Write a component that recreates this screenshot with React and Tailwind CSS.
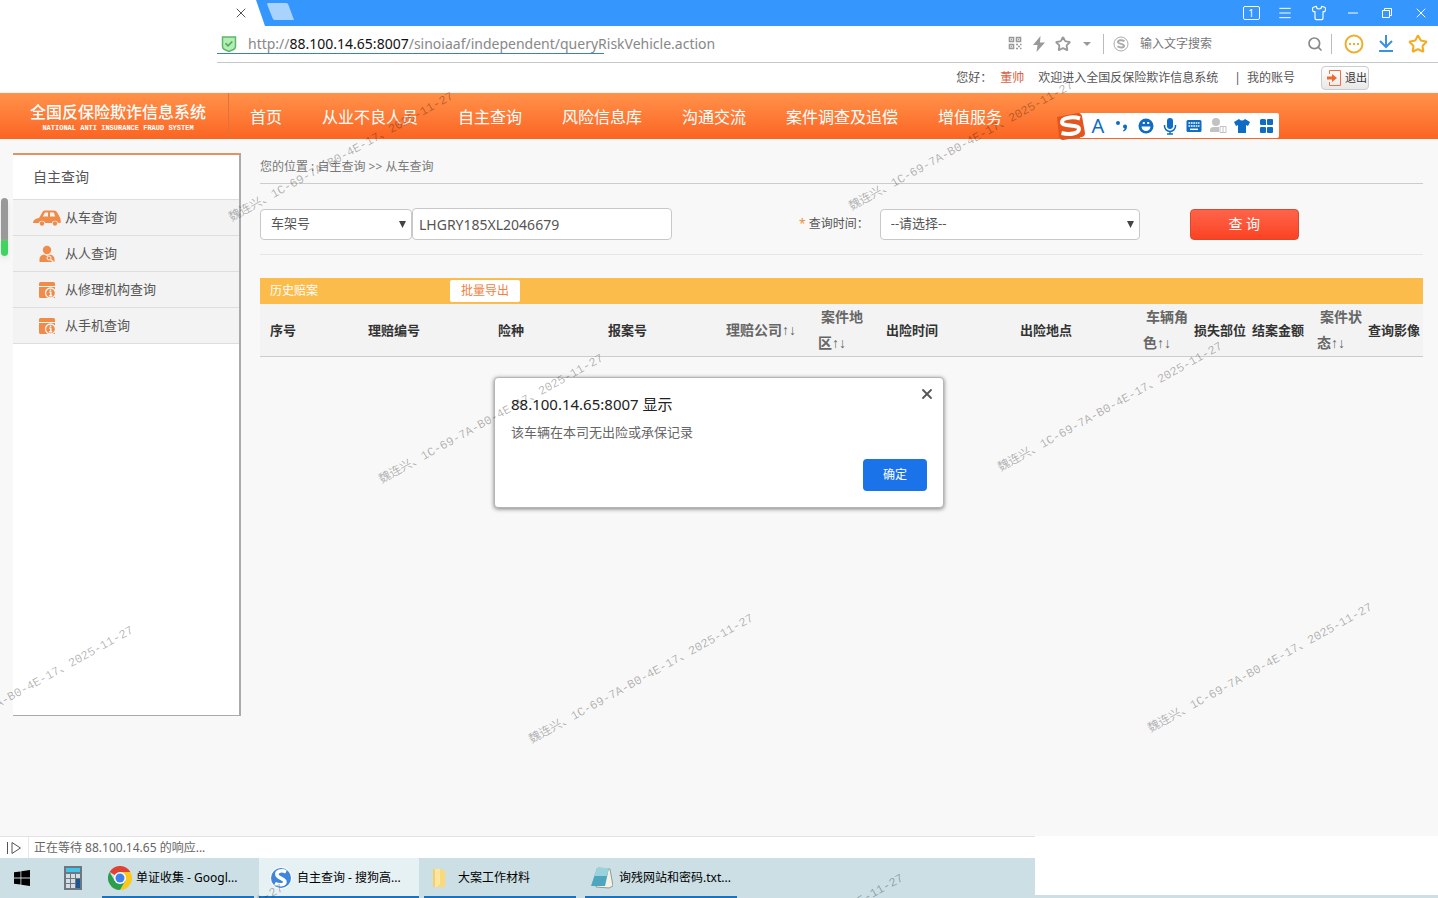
import { useState } from 'react';
import { Menu, Minus, Search, Shirt, Star, X } from 'lucide-react';

const navItems = ['首页', '从业不良人员', '自主查询', '风险信息库', '沟通交流', '案件调查及追偿', '增值服务'];

const columns = [
  { label: '序号', width: 108 },
  { label: '理赔编号', width: 130 },
  { label: '险种', width: 110 },
  { label: '报案号', width: 118 },
  { label: '理赔公司', width: 92, sortable: true },
  { label: '案件地', rest: '区', width: 68, sortable: true },
  { label: '出险时间', width: 134 },
  { label: '出险地点', width: 123 },
  { label: '车辆角', rest: '色', width: 51, sortable: true },
  { label: '损失部位', width: 58 },
  { label: '结案金额', width: 65 },
  { label: '案件状', rest: '态', width: 51, sortable: true },
  { label: '查询影像', width: 55 },
];
const totalWidth = columns.reduce((sum, column) => sum + column.width, 0);

const watermarks = [
  'left-[230px] top-[211px]',
  'left-[850px] top-[200px]',
  'left-[380px] top-[473px]',
  'left-[999px] top-[461px]',
  'left-[530px] top-[733px]',
  'left-[1149px] top-[722px]',
  '-left-[90px] top-[745px]',
  'left-[60px] top-[1003px]',
  'left-[680px] top-[993px]',
];

function CarIcon() {
  return (
    <svg viewBox="0 0 28 16" className="h-4 w-7" fill="#f08c4a">
      <path d="M0 13c0-3 3-4.600 6-5L9.500 2c.5-1 1.300-1.500 2.500-1.500h9c1.500 0 2.500.7 3.200 2L27 7.500c.7 1.500 1 4 .5 5.500h-2.200a3.500 3.500 0 0 0-6.600 0h-6.400a3.500 3.500 0 0 0-6.600 0z" />
      <path d="M12 2.500h3v4H9.800zM17 2.500h3.800l1.400 4H17z" fill="#f3f3f3" />
      <circle cx="9" cy="13.500" r="2.200" />
      <circle cx="22" cy="13.500" r="2.200" />
    </svg>
  );
}

function PersonIcon() {
  return (
    <svg viewBox="0 0 18 18" className="h-[18px] w-[18px]" fill="#f08c4a">
      <circle cx="9" cy="5" r="4.200" />
      <path d="M1.500 17v-3c0-2.500 2-4 4.500-4.500L9 11l3-1.500c2.500.5 4.500 2 4.500 4.500v3z" />
      <circle cx="11" cy="13" r="2" fill="none" stroke="#f3f3f3" />
      <path d="m12.500 14.500 3 2.500" stroke="#f3f3f3" strokeWidth="1.300" />
    </svg>
  );
}

function ArchiveIcon() {
  return (
    <svg viewBox="0 0 18 18" className="h-[18px] w-[18px]" fill="#f08c4a">
      <path d="M2.500 1h13A1.500 1.500 0 0 1 17 2.500V5H1V2.500A1.500 1.500 0 0 1 2.500 1zM1 6h16v11H2.500A1.500 1.500 0 0 1 1 15.500z" />
      <circle cx="12.500" cy="12" r="5" stroke="#f3f3f3" strokeWidth="1.300" />
      <path d="M11.300 11.300h1.500v3.500m-1.800 0h3.200M12.500 8.500V10" stroke="#f3f3f3" strokeWidth="1.500" />
    </svg>
  );
}

const menuItems = [
  { label: '从车查询', Icon: CarIcon },
  { label: '从人查询', Icon: PersonIcon },
  { label: '从修理机构查询', Icon: ArchiveIcon },
  { label: '从手机查询', Icon: ArchiveIcon },
];

function TitleBar() {
  return (
    <div className="flex h-[26px] bg-[#3596fe]">
      <div className="relative flex w-[265px] items-center justify-end pr-4">
        <svg viewBox="0 0 265 26" className="absolute inset-0 h-full w-full" fill="#fff">
          <path d="M0 0h256l9 26H0z" />
        </svg>
        <button aria-label="关闭标签页" className="relative text-[#555]">
          <X className="h-4 w-4" strokeWidth={1.5} />
        </button>
      </div>
      <button aria-label="新建标签页" className="h-6">
        <svg viewBox="0 0 30 24" className="h-6 w-[30px]">
          <path d="M3 3h18q2 0 2.500 2L29 20H10q-2 0-2.500-2L2 4z" fill="#a9d3fc" />
        </svg>
      </button>
      <div className="ml-auto flex text-white">
        <button aria-label="标签" className="flex w-[34px] items-center justify-center">
          <span className="h-[14px] w-[17px] rounded-xs border border-white text-[10px] leading-3">1</span>
        </button>
        <button aria-label="菜单" className="flex w-[34px] items-center justify-center"><Menu className="h-4 w-4" strokeWidth={1.5} /></button>
        <button aria-label="皮肤" className="flex w-[34px] items-center justify-center"><Shirt className="h-4 w-4" strokeWidth={1.7} /></button>
        <button aria-label="最小化" className="flex w-[34px] items-center justify-center"><Minus className="h-4 w-4" strokeWidth={1.5} /></button>
        <button aria-label="还原" className="flex w-[34px] items-center justify-center">
          <svg viewBox="0 0 12 12" className="h-3 w-3" fill="none" stroke="currentColor">
            <path d="M1.500 3.500h7v7h-7zM3.500 3V1.500h7v7H9" />
          </svg>
        </button>
        <button aria-label="关闭" className="flex w-[34px] items-center justify-center"><X className="h-4 w-4" strokeWidth={1.5} /></button>
      </div>
    </div>
  );
}

function AddressBar() {
  return (
    <div className="ml-[217px] flex h-[37px] items-center border-b border-[#c6c9cc] pb-px pr-1">
      <div className="flex min-w-0 grow self-stretch pt-2">
        <div className="flex h-5 w-[387px] items-center border-b border-[#3b82b8] pl-1">
          <svg viewBox="0 0 16 16" className="h-4 w-4 shrink-0">
            <path d="M1.500 1h13v9.500q0 2-2 3L8 15.500l-4.500-2q-2-1-2-3z" fill="#b4ecb6" stroke="#5cb768" strokeWidth="1.500" />
            <path d="m4.500 7.300 2.500 2.500 4.300-4.300" fill="none" stroke="#4aa95a" strokeWidth="1.600" />
          </svg>
          <span className="ml-[11px] whitespace-nowrap text-sm text-[#888]">
            http://<span className="text-[#111]">88.100.14.65:8007</span>/sinoiaaf/independent/queryRiskVehicle.action
          </span>
        </div>
      </div>
      <div className="flex text-[#999]">
        <button aria-label="二维码" className="flex w-6 justify-center">
          <svg viewBox="0 0 14 14" className="h-[14px] w-[14px]" fill="none" stroke="currentColor" strokeWidth="1.600">
            <path d="M1.500 1.500h4v4h-4zM8.500 1.500h4v4h-4zM1.500 8.500h4v4h-4z" />
            <path d="M8 8.500h2M12 8.500h1.500M10 10.500h2M8 12.500h2M12 12.500h1.500M3 3.500h1M10 3.500h1M3 10.500h1" />
          </svg>
        </button>
        <button aria-label="极速模式" className="flex w-6 justify-center">
          <svg viewBox="0 0 14 16" className="h-4 w-[14px]" fill="currentColor"><path d="M8.500 0 1 9h4.500L4.500 16 13 6.500H8z" /></svg>
        </button>
        <button aria-label="收藏" className="flex w-6 justify-center"><Star className="h-4 w-4" strokeWidth={2.8} /></button>
        <button aria-label="更多" className="flex w-6 items-center justify-center">
          <svg viewBox="0 0 8 4" className="h-1 w-2" fill="currentColor"><path d="M0 0h8L4 4z" /></svg>
        </button>
      </div>
      <form className="ml-1 flex h-5 w-[229px] items-center border-x border-[#bbb] px-2" onSubmit={(e) => e.preventDefault()}>
        <svg viewBox="0 0 18 18" className="h-[18px] w-[18px] shrink-0" fill="none" stroke="#aaa">
          <circle cx="9" cy="9" r="7" />
          <path d="M12.500 6.300C10 4.500 5.500 5 6 7.300c.5 2 6 1.200 6 3.500 0 2-4 2.300-6.500.5" strokeWidth="2" />
        </svg>
        <input aria-label="搜索" placeholder="输入文字搜索" className="ml-[10px] min-w-0 grow text-xs outline-none placeholder:text-[#777]" />
        <button aria-label="搜索" className="text-[#888]"><Search className="h-4 w-4" strokeWidth={2.5} /></button>
      </form>
      <div className="ml-[6px] flex">
        <button aria-label="消息" className="flex w-8 justify-center">
          <svg viewBox="0 0 20 20" className="h-5 w-5" fill="none" stroke="#eeaf2e" strokeWidth="2">
            <circle cx="10" cy="10" r="8.500" />
            <path d="M5 10h2M9 10h2M13 10h2" />
          </svg>
        </button>
        <button aria-label="下载" className="flex w-8 justify-center">
          <svg viewBox="0 0 18 18" className="h-[18px] w-[18px]" fill="none" stroke="#3b92e0" strokeWidth="2">
            <path d="M9 1v11.500M3 7l6 6 6-6M2 17h14" />
          </svg>
        </button>
        <button aria-label="收藏夹" className="flex w-8 justify-center text-[#f3ad24]"><Star className="h-5 w-5" strokeWidth={2.5} /></button>
      </div>
    </div>
  );
}

function ImeToolbar() {
  return (
    <div className="absolute right-[159px] bottom-px flex h-[25px] items-center">
      <svg viewBox="0 0 30 28" className="z-10 -mr-[6px] h-7 w-[30px]">
        <path d="m1 5 21-4q3 0 4 3l3 17q0 3-3 4L7 28q-3 0-4-3z" fill="#e4541d" />
        <path d="M24 6.500C16 4 5.500 6 6 10.500c.5 4.500 17 1.500 17 6.500 0 4.500-9 6-17.500 4" fill="none" stroke="#fff" strokeWidth="4" />
      </svg>
      <div className="flex h-full items-center rounded-r-xs bg-white pl-[6px] text-[#0e6cc4]">
        <span className="w-6 text-center text-xl leading-6">A</span>
        <svg viewBox="0 0 169 24" className="h-6 w-[169px]" fill="currentColor">
          <circle cx="8" cy="9" r="2" />
          <path d="M13 12.500a2 2 0 1 1 4 0c0 2.500-1 4-3.500 5l-.5-1q1.500-.8 1.800-2-1.800-.2-1.800-2z" />
          <circle cx="36" cy="12" r="7.500" />
          <path d="M31.500 12.500h9a4.500 4.500 0 0 1-9 0zM32.800 8h2v2h-2zM37.200 8h2v2h-2z" fill="#fff" />
          <rect x="57" y="4" width="6" height="11" rx="3" />
          <path d="M54.500 11v1a5.500 5.500 0 0 0 11 0v-1M60 17.500V20M57 20h6" fill="none" stroke="currentColor" strokeWidth="1.500" />
          <rect x="76.500" y="6" width="15" height="12" rx="1.500" />
          <path d="M78.500 9h11M78.500 12h11" stroke="#fff" strokeWidth="1.500" strokeDasharray="1.700 .7" />
          <path d="M80 15.300h8" stroke="#fff" strokeWidth="1.500" />
          <g fill="#c2c2c2">
            <circle cx="106" cy="8" r="4" />
            <path d="M100 18v-2q0-3 4-3h5v5z" />
            <path d="M110 12.500h6v6h-6zM113 12.500v6" fill="#fff" stroke="#c2c2c2" />
          </g>
          <path d="m129 5-5 3 2 4 2-1v8h8v-8l2 1 2-4-5-3q-3 3-6 0z" />
          <path d="M151.500 5h3a1.500 1.500 0 0 1 1.500 1.500V11h-4.500A1.500 1.500 0 0 1 150 9.500v-3A1.500 1.500 0 0 1 151.500 5zM158 5h4q1 0 1 1v4q0 1-1 1h-4q-1 0-1-1V6q0-1 1-1zM151 13h4q1 0 1 1v4q0 1-1 1h-4q-1 0-1-1v-4q0-1 1-1zM158 13h4q1 0 1 1v4q0 1-1 1h-4q-1 0-1-1v-4q0-1 1-1z" />
        </svg>
      </div>
    </div>
  );
}

function Header() {
  return (
    <header>
      <div className="flex h-[30px] items-center justify-end bg-white pr-[69px] text-xs text-[#555]">
        <span>您好：</span>
        <span className="ml-2 text-[#d8623f]">董帅</span>
        <span className="ml-[14px]">欢迎进入全国反保险欺诈信息系统</span>
        <span className="ml-4">|</span>
        <a href="#account" className="ml-[6px]">我的账号</a>
        <button className="ml-[26px] flex h-6 w-12 items-center gap-[3px] rounded-sm border border-[#ccc] bg-linear-to-b from-white to-[#e8e8e8] pl-1 text-[11px] text-[#333]">
          <svg viewBox="0 0 16 16" className="h-4 w-4 shrink-0" fill="none" stroke="#ec7440">
            <path d="M3.500 4V.5h11v15h-11V12" />
            <path d="M1 6.500h5V4l5 4-5 4V9.500H1z" fill="#ec6a2c" stroke="none" />
          </svg>
          退出
        </button>
      </div>
      <div className="relative flex h-[46px] items-center bg-linear-to-b from-[#ff9149] to-[#fb6421] text-white shadow-[0_1px_2px_rgba(120,60,30,0.6)]">
        <div className="flex h-full w-[229px] shrink-0 flex-col items-center justify-center border-r border-[#e0733c] pt-1 pl-2">
          <span className="text-base leading-5 font-medium">全国反保险欺诈信息系统</span>
          <span className="font-['Liberation_Mono',monospace] text-[7px] leading-3 font-bold whitespace-nowrap">NATIONAL ANTI INSURANCE FRAUD SYSTEM</span>
        </div>
        <nav className="flex gap-10 pt-[2px] pl-[21px] text-base whitespace-nowrap">
          {navItems.map((item) => (
            <a key={item} href="#nav">{item}</a>
          ))}
        </nav>
        <ImeToolbar />
      </div>
    </header>
  );
}

function Sidebar() {
  return (
    <aside className="w-[228px] shrink-0 border-t-2 border-r-2 border-b border-t-[#e39363] border-r-[#aaa] border-b-[#aaa] bg-white text-[#555]">
      <h2 className="flex h-11 items-center pl-5 text-sm">自主查询</h2>
      <ul className="text-[13px]">
        {menuItems.map(({ label, Icon }) => (
          <li key={label} className="border-t border-[#dedede] bg-[#f3f3f3] last:border-b">
            <a href="#query" className="flex h-[35px] items-center pl-5">
              <span className="mr-1 flex w-7 justify-center"><Icon /></span>
              {label}
            </a>
          </li>
        ))}
      </ul>
    </aside>
  );
}

function SelectField({ id, label, className, children }) {
  return (
    <div className={`relative shrink-0 ${className}`}>
      <select id={id} aria-label={label} className="h-[31px] w-full appearance-none rounded-sm border border-[#c8c8c8] bg-white pl-[10px] text-[13px] text-[#555]">
        {children}
      </select>
      <svg viewBox="0 0 7 7" className="pointer-events-none absolute top-3 right-[6px] h-[7px] w-[7px]" fill="#444"><path d="M0 0h7L3.500 7z" /></svg>
    </div>
  );
}

function QueryPanel() {
  const [vin, setVin] = useState('LHGRY185XL2046679');

  return (
    <section className="ml-[19px] min-w-0 grow">
      <p className="h-[31px] border-b border-[#ccc] text-xs leading-7 text-[#777]">您的位置 : 自主查询 &gt;&gt; 从车查询</p>
      <form className="flex h-[71px] items-center border-b border-[#e6e6e6] pt-[10px] text-[13px]" onSubmit={(e) => e.preventDefault()}>
        <SelectField id="query-type" label="查询类型" className="w-[152px]">
          <option>车架号</option>
        </SelectField>
        <input
          aria-label="车架号"
          value={vin}
          onChange={(e) => setVin(e.target.value)}
          className="h-8 w-[260px] shrink-0 rounded-sm border border-[#c8c8c8] bg-white px-[6px] text-sm text-[#555]"
        />
        <label htmlFor="query-time" className="ml-[127px] shrink-0 text-xs text-[#555]">
          <span className="text-[#f08c3a]">* </span>查询时间：
        </label>
        <SelectField id="query-time" className="ml-[11px] w-[260px]">
          <option>--请选择--</option>
        </SelectField>
        <button className="ml-[50px] h-[31px] w-[109px] shrink-0 rounded-sm border border-[#d9492f] bg-linear-to-b from-[#ff6349] to-[#fb4220] text-sm text-white">查 询</button>
      </form>

      <div className="mt-[23px] flex h-[26px] items-center bg-[#fcbc4b] pl-[10px] text-xs">
        <h3 className="w-[180px] text-white">历史赔案</h3>
        <button className="h-[22px] w-[70px] rounded-xs bg-white text-[#f08246]">批量导出</button>
      </div>
      <table className="w-full table-fixed border-b border-[#ccc] bg-[#f3f3f3] text-left text-[13px] leading-[26px] whitespace-nowrap">
        <colgroup>
          {columns.map((column) => (
            <col key={column.label} style={{ width: `${(column.width / totalWidth) * 100}%` }} />
          ))}
        </colgroup>
        <thead>
          <tr className="h-[52px]">
            {columns.map((column) => (
              <th key={column.label} className="p-0 font-bold text-[#333] first:pl-[10px]">
                {column.sortable ? (
                  <a href="#sort" className="text-sm leading-[26px] text-[#666]">
                    {column.rest ? <><span className="pl-[3px]">{column.label}</span><br />{column.rest}</> : column.label}
                    <span className="font-['Liberation_Sans',sans-serif] leading-none">↑↓</span>
                  </a>
                ) : column.label}
              </th>
            ))}
          </tr>
        </thead>
      </table>
    </section>
  );
}

function AlertDialog({ onClose }) {
  return (
    <div role="alertdialog" aria-labelledby="alert-title" className="absolute inset-x-0 top-[238px] mx-auto flex h-[131px] w-[450px] flex-col rounded-sm border border-[#b5b5b5] bg-white px-4 pt-[14px] pb-4 shadow-[0_1px_4px_rgba(0,0,0,0.5)]">
      <button aria-label="关闭" onClick={onClose} className="absolute top-2 right-2 text-[#555]">
        <X className="h-4 w-4" strokeWidth={2.7} />
      </button>
      <h2 id="alert-title" className="text-[15px] leading-6 text-[#222]">88.100.14.65:8007 显示</h2>
      <p className="mt-1 text-[13px] leading-6 text-[#666]">该车辆在本司无出险或承保记录</p>
      <button onClick={onClose} className="mt-auto h-8 w-16 shrink-0 self-end rounded-sm bg-[#1a73e8] text-xs text-white">确定</button>
    </div>
  );
}

function Taskbar() {
  return (
    <footer className="flex bg-white">
      <div className="w-[72%]">
        <div className="flex h-[22px] items-center border-t border-[#e2e2e2] text-xs text-[#666]">
          <span className="flex h-full w-[29px] items-center justify-center border-r border-[#e8e8e8] text-[#555]">
            <svg viewBox="0 0 16 14" className="h-[14px] w-4" fill="none" stroke="currentColor"><path d="M1.500 1v12M6 1.500v11L14.500 7z" /></svg>
          </span>
          <span className="ml-[5px]">正在等待 88.100.14.65 的响应...</span>
        </div>
        <div className="flex h-10 bg-[#cbdfe5] text-xs whitespace-nowrap text-black">
          <button aria-label="开始" className="flex w-11 items-center justify-center">
            <svg viewBox="0 0 16 16" className="h-4 w-4"><path d="m0 2.300 6.500-.9v6.100H0zM7.300 1.300 16 0v7.500H7.300zM0 8.400h6.500v6.200L0 13.700zM7.300 8.400H16V16l-8.700-1.300z" /></svg>
          </button>
          <button aria-label="计算器" className="flex w-[58px] items-center justify-center">
            <svg viewBox="0 0 18 24" className="h-6 w-[18px]">
              <path d="M0 0h18v24H0z" fill="#6d7781" />
              <path d="M2 2h14v4H2z" fill="#42c4ea" />
              <path d="M2 8h4v4H2zM7 8h4v4H7zM12 8h4v4h-4zM2 13h4v4H2zM7 13h4v4H7zM2 18h4v4H2zM7 18h4v4H7z" fill="#d5dce2" />
              <path d="M12 13h4v9h-4z" fill="#1d5591" />
            </svg>
          </button>
          <button className="flex w-[152px] items-center gap-1 border-b-2 border-[#1874c3] pt-[2px] pl-[6px]">
            <svg viewBox="0 0 24 24" className="h-6 w-6 shrink-0">
              <path d="M12 12 1.600 6A12 12 0 0 1 22.400 6z" fill="#df4233" />
              <path d="M12 12V6h10.400A12 12 0 0 1 12 24l5.200-9z" fill="#fbc91e" />
              <path d="m12 12-5.200 3L1.600 6A12 12 0 0 0 12 24l5.200-9z" fill="#2d9f4c" />
              <circle cx="12" cy="12" r="6" fill="#fff" />
              <circle cx="12" cy="12" r="4.500" fill="#4080ec" />
            </svg>
            单证收集 - Googl...
          </button>
          <button className="ml-[5px] flex w-40 items-center gap-1 border-b-2 border-[#1874c3] bg-[#e6f1f4] pt-[2px] pl-[10px]">
            <svg viewBox="0 0 24 24" className="h-6 w-6 shrink-0">
              <circle cx="12" cy="12" r="11" fill="#f8fbfd" />
              <circle cx="12" cy="12" r="10" fill="#3f85dc" />
              <path d="M17 6C12 3.500 7 5.500 8 9s8 3.500 8 7c0 2.500-5 4-10 1.500" fill="none" stroke="#fff" strokeWidth="3.500" />
            </svg>
            自主查询 - 搜狗高...
          </button>
          <button className="ml-[5px] flex w-[152px] items-center gap-[10px] border-b-2 border-[#1874c3] pt-[2px] pl-[6px]">
            <svg viewBox="0 0 18 20" className="h-5 w-[18px] shrink-0">
              <path d="M3 1h8v18H3z" fill="#f5cf6b" />
              <path d="M8 2h7v17H8z" fill="#fbd878" />
              <path d="M5 1h5v15l-3 3H5z" fill="#fee69c" />
            </svg>
            大案工作材料
          </button>
          <button className="ml-[9px] flex w-[152px] items-center gap-[6px] border-b-2 border-[#1874c3] pt-[2px] pl-[6px]">
            <svg viewBox="0 0 22 22" className="h-[22px] w-[22px] shrink-0">
              <path d="m7 1 12 1 3 17-4 2-13-1z" fill="#f5f2e6" stroke="#8f9a94" />
              <path d="M6 1h12l-4 18H0z" fill="#4da5be" />
              <path d="M6 1h12l-2 8H3z" fill="#9bd1db" />
            </svg>
            询残网站和密码.txt...
          </button>
        </div>
      </div>
      <div className="grow border-b-3 border-[#cbdfe5]" />
    </footer>
  );
}

export default function App() {
  const [alertOpen, setAlertOpen] = useState(true);

  return (
    <div className="relative flex min-h-screen flex-col overflow-hidden bg-white font-['Noto_Sans','Noto_Sans_CJK_SC',sans-serif]">
      <TitleBar />
      <AddressBar />
      <Header />
      <main className="relative flex grow bg-[#f8f8f8] pt-[14px] pr-[15px] pb-[120px] pl-[13px]">
        <div className="absolute top-[59px] left-px h-[58px] w-[7px] rounded-full bg-linear-to-b from-[#999] from-70% to-[#3fd35f] to-75% shadow-md" />
        <Sidebar />
        <QueryPanel />
        {alertOpen && <AlertDialog onClose={() => setAlertOpen(false)} />}
      </main>
      <Taskbar />
      <div aria-hidden="true" className="pointer-events-none absolute inset-0 overflow-hidden">
        {watermarks.map((place) => (
          <span key={place} className={`absolute origin-left -rotate-[29deg] font-['Liberation_Mono','Noto_Sans_CJK_SC',monospace] text-xs leading-4 whitespace-nowrap text-black/30 ${place}`}>
            魏连兴、1C-69-7A-B0-4E-17、2025-11-27
          </span>
        ))}
      </div>
    </div>
  );
}
